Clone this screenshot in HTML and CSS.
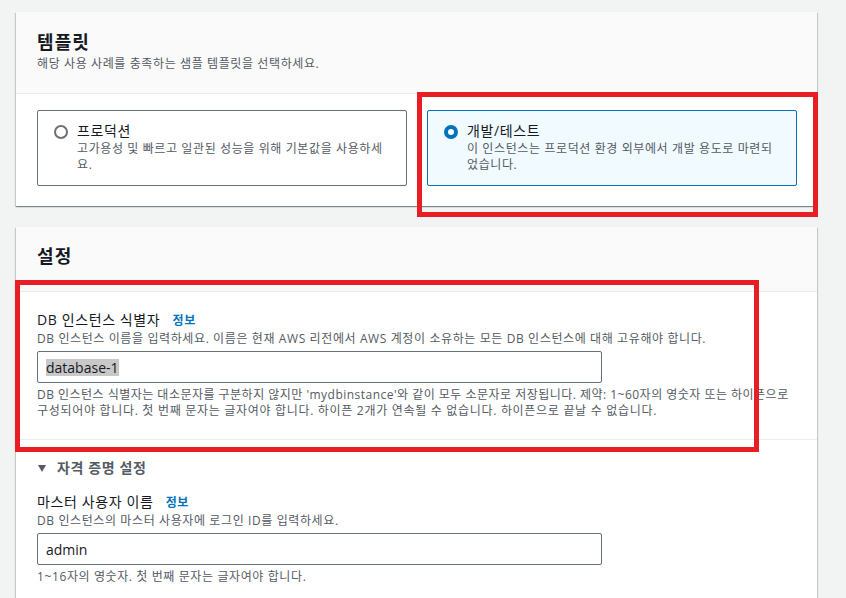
FILE: index.html
```html
<!DOCTYPE html>
<html lang="ko">
<head>
<meta charset="utf-8">
<title>템플릿 / 설정</title>
<link rel="stylesheet" href="styles.css">
</head>
<body>
<div class="page">
  <section class="card">
    <header class="card-head head-tall">
      <h2 class="card-title">템플릿</h2>
      <p class="card-sub">해당 사용 사례를 충족하는 샘플 템플릿을 선택하세요.</p>
    </header>
    <div class="card-body tiles">
      <div class="tile">
        <span class="radio"></span>
        <div class="tile-text">
          <div class="tile-label">프로덕션</div>
          <div class="tile-desc">고가용성 및 빠르고 일관된 성능을 위해 기본값을 사용하세요.</div>
        </div>
      </div>
      <div class="tile tile-on">
        <span class="radio radio-on"></span>
        <div class="tile-text">
          <div class="tile-label">개발/테스트</div>
          <div class="tile-desc">이 인스턴스는 프로덕션 환경 외부에서 개발 용도로 마련되었습니다.</div>
        </div>
      </div>
    </div>
  </section>

  <section class="card">
    <header class="card-head head-short">
      <h2 class="card-title">설정</h2>
    </header>
    <div class="section sec-first">
      <div class="field-label">DB 인스턴스 식별자 <a class="info">정보</a></div>
      <div class="field-desc">DB 인스턴스 이름을 입력하세요. 이름은 현재 AWS 리전에서 AWS 계정이 소유하는 모든 DB 인스턴스에 대해 고유해야 합니다.</div>
      <div class="input"><span class="sel">database-1</span></div>
      <div class="field-hint"><span class="line line-a">DB 인스턴스 식별자는 대소문자를 구분하지 않지만 'mydbinstance'와 같이 모두 소문자로 저장됩니다. 제약: 1~60자의 영숫자 또는 하이픈으로</span><span class="line line-b">구성되어야 합니다. 첫 번째 문자는 글자여야 합니다. 하이픈 2개가 연속될 수 없습니다. 하이픈으로 끝날 수 없습니다.</span></div>
    </div>
    <div class="section sec-second">
      <div class="expander">
        <svg class="caret" width="8" height="7" viewBox="0 0 8 7"><polygon points="0,0 8,0 4,7" fill="#545b64"/></svg>
        <span>자격 증명 설정</span>
      </div>
      <div class="field-label lbl2">마스터 사용자 이름 <a class="info">정보</a></div>
      <div class="field-desc">DB 인스턴스의 마스터 사용자에 로그인 ID를 입력하세요.</div>
      <div class="input"><span>admin</span></div>
      <div class="field-hint">1~16자의 영숫자. 첫 번째 문자는 글자여야 합니다.</div>
    </div>
  </section>
</div>

<div class="mark mark-1"></div>
<div class="mark mark-2"></div>
</body>
</html>
```

FILE: styles.css
```css
html, body {
  margin: 0;
  padding: 0;
  overflow: hidden;
  height: 598px;
}
body {
  background: #f2f3f3;
  font-family: "Open Sans", "Noto Sans CJK KR", sans-serif;
  color: #16191f;
  letter-spacing: 0.038em;
  position: relative;
}
.page {
  width: 801px;
  padding: 12px 0 0 16px;
  display: flex;
  flex-direction: column;
  gap: 21px;
}
.card {
  background: #ffffff;
  box-shadow: 0 1px 1px 0 rgba(0, 28, 36, 0.3), 1px 1px 1px 0 rgba(0, 28, 36, 0.15), -1px 1px 1px 0 rgba(0, 28, 36, 0.15);
}
.card-head {
  background: #fafafa;
  border-bottom: 1px solid #eaeded;
  padding: 0 20px 0 21px;
}
.head-tall { padding-top: 19px; padding-bottom: 21px; }
.head-short { padding-top: 18px; padding-bottom: 24px; }
.card-title {
  margin: 0;
  font-size: 18px;
  line-height: 22px;
  font-weight: 700;
  letter-spacing: 0.06em;
}
.card-sub {
  margin: 3px 0 0;
  font-size: 12px;
  line-height: 16px;
  color: #545b64;
}
.tiles {
  display: grid;
  grid-template-columns: 1fr 1fr;
  gap: 20px;
  padding: 16px 20px 20px 21px;
}
.tile {
  border: 1px solid #687078;
  border-radius: 2px;
  padding: 10px 14px 12px 16px;
  display: flex;
  align-items: flex-start;
  gap: 9px;
}
.tile-on {
  border-color: #0073bb;
  background: #f1faff;
}
.radio {
  flex: none;
  width: 14px;
  height: 14px;
  box-sizing: border-box;
  border: 2px solid #687078;
  border-radius: 50%;
  background: #fff;
  margin-top: 4px;
}
.radio-on {
  border: 4.5px solid #0073bb;
}
.tile-label {
  font-size: 14px;
  line-height: 20px;
}
.tile-desc {
  font-size: 12px;
  line-height: 16px;
  color: #545b64;
}
.section {
  padding: 0 20px 0 21px;
}
.sec-first {
  padding-top: 18px;
  padding-bottom: 20px;
  border-bottom: 1px solid #eaeded;
}
.sec-second {
  padding-top: 18px;
  padding-bottom: 20px;
}
.field-label {
  font-size: 14px;
  line-height: 20px;
}
.info {
  color: #0073bb;
  font-size: 12px;
  font-weight: 700;
  margin-left: 8px;
}
.field-desc {
  font-size: 12px;
  line-height: 16px;
  color: #545b64;
}
.input {
  width: 565px;
  height: 32px;
  box-sizing: border-box;
  border: 1px solid #687078;
  border-radius: 2px;
  margin-top: 4px;
  padding: 0 8px;
  display: flex;
  align-items: center;
  font-size: 14px;
  letter-spacing: 0;
  background: #fff;
}
.sel {
  background: #c8c8c8;
  line-height: 17px;
}
.field-hint {
  font-size: 12px;
  line-height: 16px;
  color: #545b64;
  margin-top: 4px;
}
.field-hint .line {
  display: block;
  white-space: nowrap;
}
.line-a { letter-spacing: 0.04em; }
.line-b { letter-spacing: 0.058em; }
.expander {
  display: flex;
  align-items: center;
  gap: 11px;
  font-size: 14px;
  line-height: 20px;
  font-weight: 700;
  color: #545b64;
  padding-left: 1px;
}
.caret { flex: none; }
.lbl2 { margin-top: 14px; }
.mark {
  position: absolute;
  border: 5px solid #e81e25;
  box-sizing: border-box;
}
.mark-1 {
  left: 417px;
  top: 92px;
  width: 401px;
  height: 125px;
}
.mark-2 {
  left: 15px;
  top: 280px;
  width: 744px;
  height: 172px;
}
```
